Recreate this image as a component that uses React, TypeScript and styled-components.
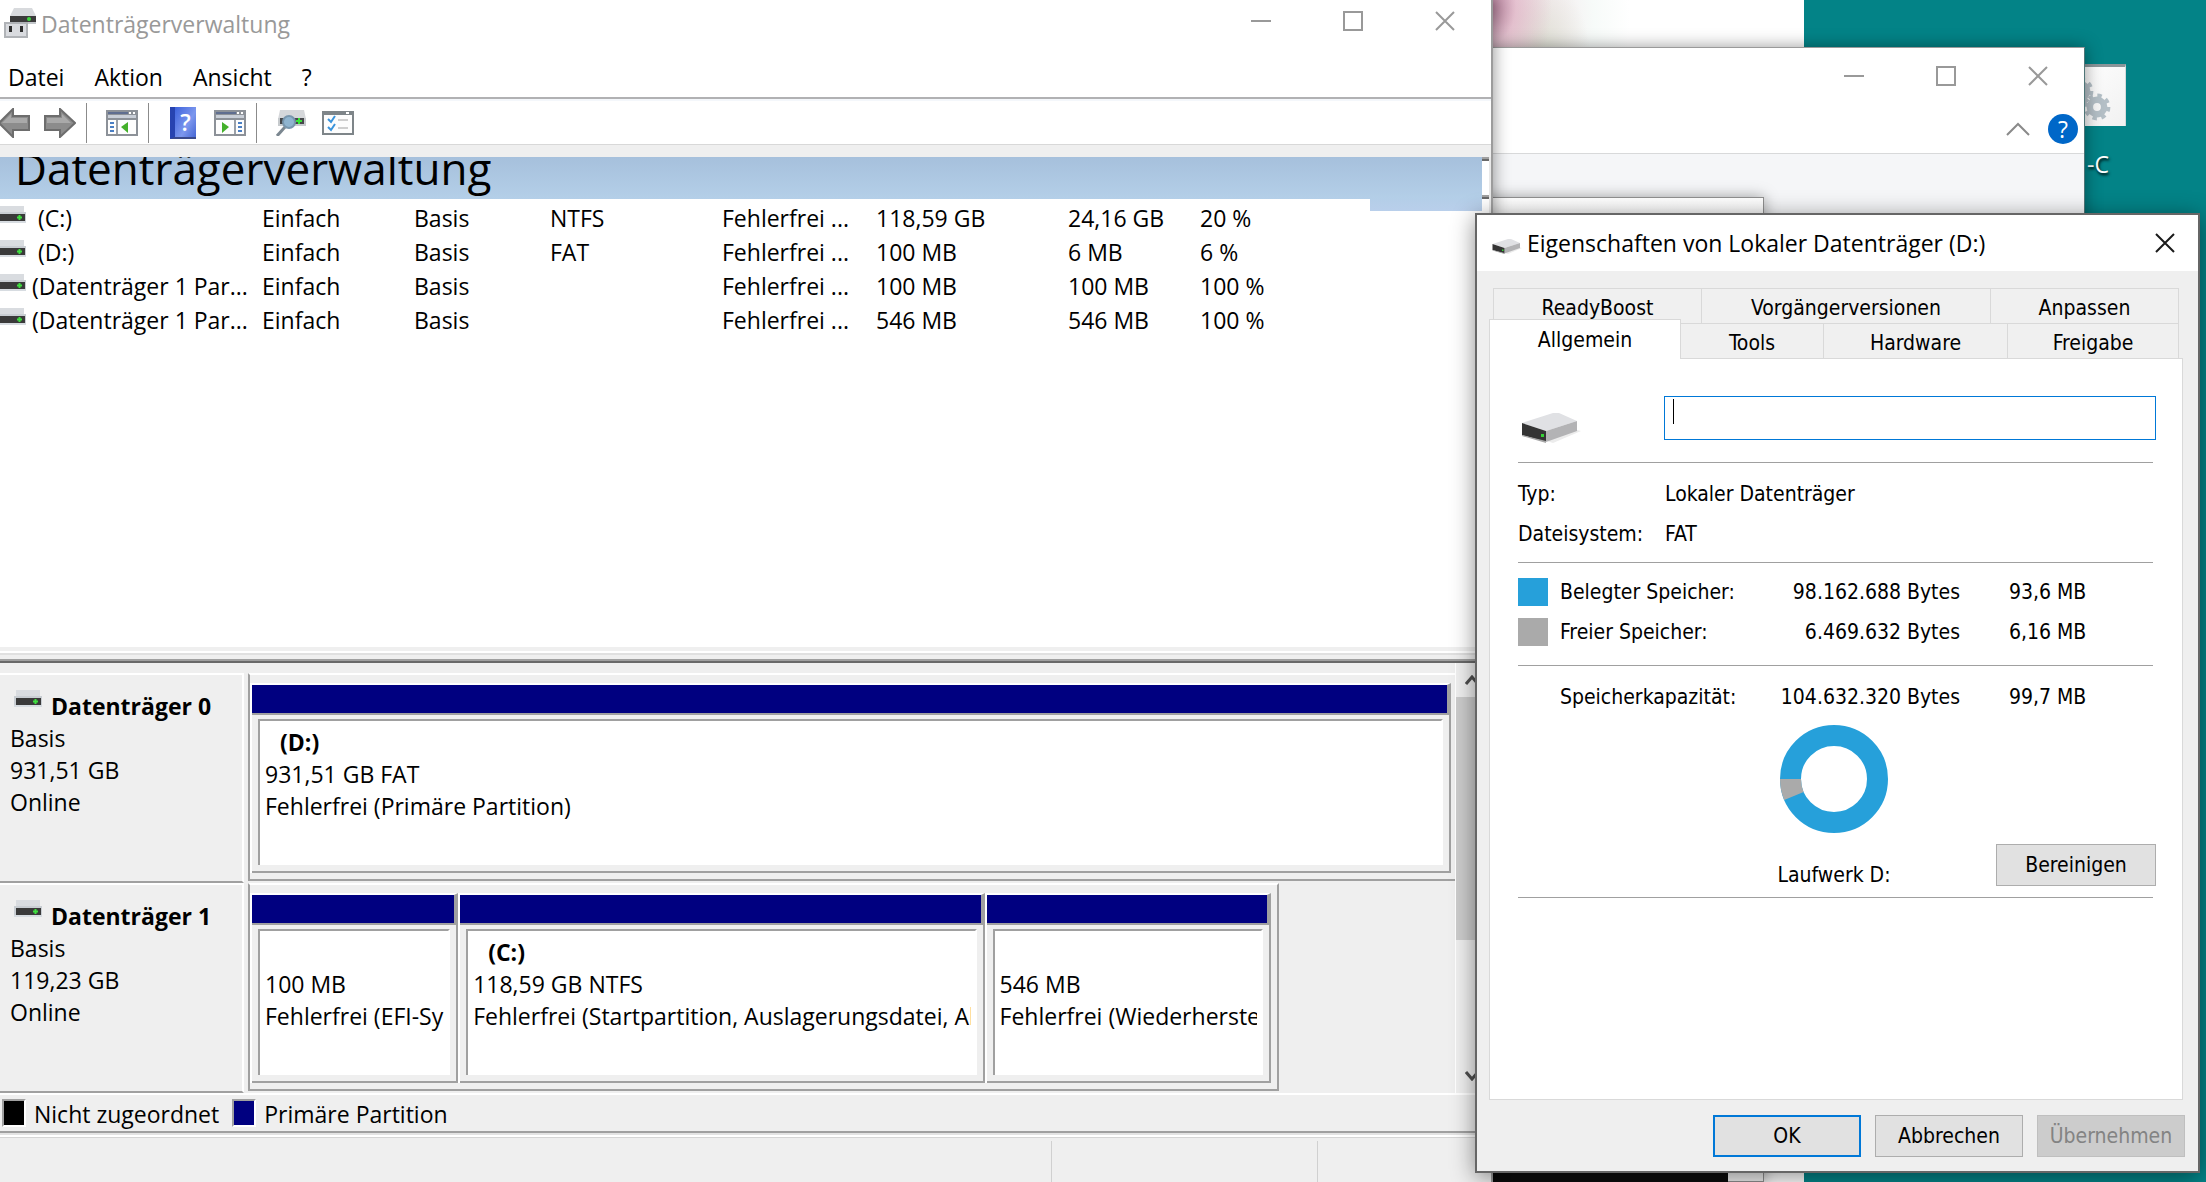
import React from "react";
import styled, { createGlobalStyle, css } from "styled-components";

const UI_FONT = `"Open Sans", "Noto Sans", sans-serif`;
const DIALOG_FONT = `"DejaVu Sans Condensed", "Open Sans", sans-serif`;

const GlobalStyle = createGlobalStyle`
  * { box-sizing: border-box; }
  body { margin: 0; background: #038387; color: #000; font-family: ${UI_FONT}; font-size: 23px; }
  button, input { font: inherit; color: inherit; }
  button { border: 0; padding: 0; background: none; }
  h1, h2, p, dl, dd, dt { margin: 0; font: inherit; }
  svg { display: block; flex: none; }
`;

const Desktop = styled.main`
  position: relative;
  height: 100vh;
  min-height: 1000px;
  overflow: hidden;
  background: #038387;
`;

/* ---------- shared window chrome ---------- */

const CaptionBar = styled.div`
  display: flex;
  margin-left: auto;
`;

const CaptionButton = styled.button<{ $dialog?: boolean }>`
  display: grid;
  place-items: center;
  width: ${(p) => (p.$dialog ? 66 : 92)}px;
  height: 56px;
  padding-bottom: ${(p) => (p.$dialog ? 0 : 14)}px;
  color: ${(p) => (p.$dialog ? "#1a1a1a" : "#999")};
`;

function MinimizeGlyph() {
  return (
    <svg width="20" height="20" viewBox="0 0 20 20" stroke="currentColor" strokeWidth="2">
      <path d="M0 10H20" />
    </svg>
  );
}

function MaximizeGlyph() {
  return (
    <svg width="20" height="20" viewBox="0 0 20 20" stroke="currentColor" strokeWidth="2" fill="none">
      <rect x="1" y="1" width="18" height="18" />
    </svg>
  );
}

function CloseGlyph() {
  return (
    <svg width="20" height="20" viewBox="0 0 20 20" stroke="currentColor" strokeWidth="2">
      <path d="M1 1L19 19M19 1L1 19" />
    </svg>
  );
}

function WindowControls() {
  return (
    <CaptionBar>
      <CaptionButton aria-label="Minimieren"><MinimizeGlyph /></CaptionButton>
      <CaptionButton aria-label="Maximieren"><MaximizeGlyph /></CaptionButton>
      <CaptionButton aria-label="Schließen"><CloseGlyph /></CaptionButton>
    </CaptionBar>
  );
}

/* ---------- background windows ---------- */

const PhotoWindow = styled.div`
  position: absolute;
  top: 0;
  bottom: 0;
  left: 1400px;
  right: 402px;
  background:
    radial-gradient(ellipse 60px 90px at 92px 6px, #b4809a 0%, rgba(222, 172, 194, 0.6) 40%, transparent 100%) no-repeat,
    radial-gradient(ellipse 50px 80px at 140px 56px, #dcdfd2 0%, transparent 100%) no-repeat,
    radial-gradient(ellipse 120px 140px at 110px 20px, #f2dce4 0%, #f7fbf9 70%, #fff 100%) no-repeat,
    #fff;
`;

const ShortcutIcon = styled.div`
  position: absolute;
  top: 64px;
  right: 80px;
  width: 60px;
  height: 62px;
  overflow: hidden;
  background: linear-gradient(135deg, #fff, #f1f1f1);
  border-top: 3px solid #8b9599;
  border-right: 1px solid #d5dadb;
`;

const ShortcutLabel = styled.span`
  position: absolute;
  top: 148px;
  right: 97px;
  line-height: 32px;
  color: #fff;
  text-shadow: 1px 2px 3px #000;
`;

const ExplorerWindow = styled.section`
  position: absolute;
  top: 47px;
  bottom: 100px;
  left: 1400px;
  right: 121px;
  background: #f5f6f8;
  border: 1px solid #9a9a9a;
  border-right-color: #4f7577;
  box-shadow: 0 0 16px rgba(0, 0, 0, 0.4);
`;

const ExplorerHead = styled.div`
  display: flex;
  flex-direction: column;
  height: 106px;
  padding-top: 7px;
  background: #fff;
  border-bottom: 1px solid #d8d9da;
`;

const RibbonTools = styled.div`
  display: flex;
  justify-content: flex-end;
  align-items: center;
  gap: 18px;
  padding: 3px 6px 0 0;
`;

const RibbonButton = styled.button`
  display: grid;
  place-items: center;
  height: 30px;
  color: #8a8a8a;
`;

const RoundHelp = styled.button`
  width: 30px;
  height: 30px;
  border-radius: 50%;
  background: #0067c8;
  color: #fff;
  font-size: 23px;
  line-height: 28px;
`;

const SmallWindow = styled.div`
  position: absolute;
  top: 197px;
  bottom: 0;
  left: 1400px;
  right: 442px;
  background: linear-gradient(#fff, #f6f6f6 20px, #efefef);
  border: 1px solid #8f8f8f;
  box-shadow: 0 0 14px rgba(0, 0, 0, 0.35);
`;

const ConsoleWindow = styled.div`
  position: absolute;
  bottom: 0;
  left: 1400px;
  right: 478px;
  height: 120px;
  background: #0c0c0c;
`;

function GearsDrawing() {
  const gear = (cx: number, cy: number, r: number) => (
    <g fill="none" stroke="#b4bfc6">
      <circle cx={cx} cy={cy} r={r * 0.55} strokeWidth={r * 0.5} />
      <circle cx={cx} cy={cy} r={r * 0.88} strokeWidth={r * 0.3} strokeDasharray={`${r * 0.34} ${r * 0.351}`} />
    </g>
  );
  return (
    <svg width="60" height="62" viewBox="0 0 60 62">
      {gear(14, 24, 13)}
      {gear(31, 40, 13)}
    </svg>
  );
}

function BackgroundWindows() {
  return (
    <>
      <PhotoWindow />
      <ShortcutIcon><GearsDrawing /></ShortcutIcon>
      <ShortcutLabel>-C</ShortcutLabel>
      <ExplorerWindow>
        <ExplorerHead>
          <WindowControls />
          <RibbonTools>
            <RibbonButton aria-label="Menüband minimieren">
              <svg width="24" height="14" viewBox="0 0 24 14" fill="none" stroke="currentColor" strokeWidth="2">
                <path d="M1 13L12 2L23 13" />
              </svg>
            </RibbonButton>
            <RoundHelp aria-label="Hilfe">?</RoundHelp>
          </RibbonTools>
        </ExplorerHead>
      </ExplorerWindow>
      <SmallWindow />
      <ConsoleWindow />
    </>
  );
}

/* ---------- disk management window ---------- */

const ManagerWindow = styled.section`
  position: absolute;
  inset: 0 713px 0 0;
  display: flex;
  flex-direction: column;
  background: #fff;
  border-right: 2px solid #9c9c9c;
  box-shadow: 0 0 16px rgba(0, 0, 0, 0.45);
`;

const ManagerTitle = styled.header`
  display: flex;
  align-items: flex-start;
  height: 56px;
  padding-left: 4px;
`;

const ManagerName = styled.h1`
  margin-left: 5px;
  line-height: 48px;
  color: #999;
`;

const TitleIcon = styled.span`
  padding-top: 7px;
`;

const MenuBar = styled.nav`
  display: flex;
  gap: 30px;
  height: 43px;
  padding-left: 8px;
  border-bottom: 2px solid #b1b1b3;
`;

const MenuItem = styled.button`
  line-height: 42px;
  height: 42px;
`;

const ToolBar = styled.div`
  display: flex;
  align-items: center;
  height: 46px;
  border-top: 2px solid #f4f7fb;
  border-bottom: 1px solid #d8d8d8;
`;

const ToolButton = styled.button<{ $before?: number }>`
  display: grid;
  place-items: center;
  margin-left: ${(p) => p.$before ?? 0}px;
`;

const ToolSeparator = styled.span`
  width: 1px;
  height: 40px;
  margin-left: 10px;
  background: #8b8b8b;
`;

const HelpBook = styled.span`
  display: block;
  width: 26px;
  height: 32px;
  border-left: 5px solid #2743b0;
  border-bottom: 2px solid #3a4a8c;
  background: linear-gradient(120deg, #3d62dc, #7c97ee 60%, #4566d4);
  color: #fff;
  font-size: 23px;
  font-weight: 600;
  line-height: 30px;
  text-align: center;
`;

const ManagerBody = styled.div`
  flex: 1;
  display: flex;
  flex-direction: column;
  min-height: 0;
  padding-top: 12px;
  background: #efefef;
`;

const UpperArea = styled.div`
  flex: 1;
  display: flex;
  min-height: 0;
  background: #fff;
`;

const ListPane = styled.div`
  position: relative;
  flex: 1;
  min-width: 0;
  overflow: hidden;
`;

const Banner = styled.div`
  display: flex;
  align-items: flex-end;
  height: 42px;
  padding-left: 15px;
  overflow: hidden;
  background: linear-gradient(#a6c0dc, #b4cfe8);
  font-size: 44px;
  line-height: 62px;
`;

const BannerTail = styled.div`
  position: absolute;
  top: 42px;
  right: 0;
  width: 112px;
  height: 12px;
  background: linear-gradient(#b4cee8, #b9cfeb);
`;

const EdgeRail = styled.div`
  display: flex;
  flex-direction: column;
  gap: 34px;
  width: 9px;
  border-right: 2px solid #e9e9e9;
`;

const EdgeMark = styled.span`
  height: 4px;
  border-top: 2px solid #a0a0a0;
  border-bottom: 2px solid #696969;
`;

const VolumeTable = styled.table`
  width: 100%;
  margin-top: 2px;
  border-collapse: collapse;
  table-layout: fixed;
`;

const VolumeCell = styled.td`
  height: 34px;
  padding: 0;
  line-height: 34px;
  white-space: pre;
  overflow: hidden;
`;

const VolumeName = styled.span`
  display: flex;
  gap: 6px;
  margin-left: -2px;
  align-items: flex-start;

  svg { margin-top: 5px; }
`;

const SplitBar = styled.div`
  height: 16px;
  background: linear-gradient(
    #efefef 4px, #fff 4px, #fff 6px, #e0e0e0 6px, #e0e0e0 8px,
    #efefef 8px, #efefef 12px, #a0a0a0 12px, #a0a0a0 14px, #696969 14px
  );
`;

const GraphArea = styled.div`
  display: flex;
  border-bottom: 2px solid #fff;
`;

const DiskList = styled.div`
  flex: 1;
  min-width: 0;
  padding-top: 10px;
`;

const DiskRow = styled.div`
  display: flex;
  align-items: flex-start;
  height: 210px;
`;

const DiskLabel = styled.div`
  width: 244px;
  height: 210px;
  padding: 15px 0 0 10px;
  border-top: 2px solid #fff;
  border-right: 2px solid #fff;
  border-bottom: 2px solid #a0a0a0;
  line-height: 32px;
`;

const DiskTitle = styled.p`
  display: flex;
  gap: 9px;
  padding-left: 4px;
  font-weight: 700;
`;

const DiskTrack = styled.div`
  flex: 1;
  height: 208px;
  min-width: 0;
  padding-left: 4px;
`;

const DiskStrip = styled.div<{ $share: number; $edge?: boolean }>`
  display: flex;
  width: ${(p) => p.$share}%;
  height: 208px;
  padding: 8px ${(p) => (p.$edge ? 6 : 4)}px 6px 0;
  border: 2px solid #a0a0a0;
  border-top-color: #fff;
  border-right: ${(p) => (p.$edge ? "2px solid #a0a0a0" : "0")};
`;

const PartitionBox = styled.div<{ $grow: number }>`
  display: flex;
  flex-direction: column;
  flex: ${(p) => p.$grow} 1 0;
  min-width: 0;
  border-left: 2px solid #fff;
`;

const PartitionBar = styled.div`
  height: 32px;
  background: #000080;
  border-top: 2px solid #fff;
  border-right: 4px solid #a0a0a0;
  border-bottom: 2px solid #a0a0a0;
`;

const PartitionFrame = styled.div`
  flex: 1;
  display: flex;
  padding: 4px 6px 6px;
  border-right: 2px solid #a0a0a0;
  border-bottom: 2px solid #a0a0a0;
`;

const PartitionInfo = styled.div`
  flex: 1;
  min-width: 0;
  padding: 5px 4px 0 5px;
  background: #fff;
  border-top: 2px solid #a0a0a0;
  border-left: 2px solid #a0a0a0;
  border-right: 2px solid #fff;
`;

const PartitionLine = styled.p<{ $bold?: boolean }>`
  height: 32px;
  line-height: 32px;
  white-space: nowrap;
  overflow: hidden;
  ${(p) => p.$bold && css`
    padding-left: 15px;
    font-weight: 700;
  `}
`;

const ScrollBar = styled.div`
  display: flex;
  flex-direction: column;
  width: 36px;
  padding-right: 4px;
  border-left: 1px solid #fff;
  background: #f0f0f0;
`;

const ScrollButton = styled.button`
  display: grid;
  place-items: center;
  height: 34px;
  color: #505050;
`;

const ScrollTrack = styled.div`
  flex: 1;
`;

const ScrollThumb = styled.div`
  height: 67%;
  background: #cdcdcd;
`;

const Legend = styled.div`
  display: flex;
  gap: 13px;
  height: 36px;
  padding: 4px 0 0 2px;
`;

const LegendItem = styled.span`
  display: flex;
  gap: 8px;
  line-height: 30px;
`;

const LegendSwatch = styled.i<{ $color: string }>`
  width: 24px;
  height: 28px;
  background: ${(p) => p.$color};
  border: 2px solid #fff;
  border-top-color: #a0a0a0;
  border-left-color: #a0a0a0;
`;

const StatusBar = styled.footer`
  display: flex;
  justify-content: flex-end;
  height: 51px;
  padding-top: 4px;
  border-top: 2px solid #a0a0a0;
  background: linear-gradient(#e3e3e3 2px, #fff 2px, #fff 4px, #d5d5d5 4px, #d5d5d5 5px, #efefef 5px);
`;

const StatusCell = styled.span<{ $width: number }>`
  width: ${(p) => p.$width}px;
  margin-top: 4px;
  border-left: 1px solid #d0d0d0;
`;

function DriveFrontIcon() {
  return (
    <svg width="28" height="17" viewBox="0 0 28 17">
      <path d="M2 0H26V6H28V17H0V6H2Z" fill="#c9ced3" />
      <path d="M2 0H26V6H2Z" fill="#d9dce0" />
      <rect x="2" y="8" width="25" height="7" fill="#3a3a3a" />
      <path d="M19 11.5H24M21.500 9V14" stroke="#3fe03f" strokeWidth="2" />
      <rect y="15" width="28" height="2" fill="#d7dce1" />
    </svg>
  );
}

function DrivePerspectiveIcon({ width, height }: { width: number; height: number }) {
  return (
    <svg width={width} height={height} viewBox="0 0 60 30" preserveAspectRatio="none">
      <path d="M26 28L56 17L60 18L32 30Z" fill="#ececec" />
      <path d="M1 10L32 0H38L56 8L25 18Z" fill="#e0e1e4" />
      <path d="M25 18L56 8V18L25 29Z" fill="#b3b3b5" />
      <path d="M1 10L25 18V29L1 22Z" fill="#343434" />
      <path d="M1 22L25 28V30L1 23Z" fill="#a6a6a6" />
      <rect x="20" y="21" width="3" height="3" fill="#34d234" />
    </svg>
  );
}

function ManagerIcon() {
  return (
    <svg width="32" height="31" viewBox="0 0 32 31">
      <path d="M10 1H28L32 9H6Z" fill="#d8dadd" />
      <rect x="6" y="9" width="26" height="7" fill="#3b3b3b" />
      <rect x="6" y="15" width="26" height="2" fill="#c4c8cc" />
      <circle cx="25" cy="12" r="2" fill="#3fd83f" />
      <path d="M0 15H24V31H0Z" fill="#b0b3b7" />
      <path d="M2 17H22V29H2Z" fill="#d9dbdf" />
      <path d="M5 19H8V25H5ZM16 19H19V25H16Z" fill="#2e2e2e" />
    </svg>
  );
}

function ArrowIcon({ forward }: { forward?: boolean }) {
  return (
    <svg width="32" height="30" viewBox="0 0 32 30">
      <path
        d={forward ? "M1 8H16V1L31 15L16 29V22H1Z" : "M29 8H13V1L-1 15L13 29V22H29Z"}
        fill="#8c8c8c"
        stroke="#6d6d6d"
        strokeWidth="2"
      />
      <path
        d={forward ? "M3 10H18V6L27 15H3Z" : "M27 10H11V6L2 15H27Z"}
        fill="#a9a9a9"
      />
    </svg>
  );
}

function PaneIcon({ side }: { side: "left" | "right" }) {
  const left = side === "left";
  return (
    <svg width="32" height="26" viewBox="0 0 32 26">
      <rect width="32" height="26" fill="#8c9198" />
      <rect x="2" y="2" width="20" height="2" fill="#5f6e90" />
      <path d="M23 2H25V4H23ZM27 2H29V4H27Z" fill="#fff" />
      <rect x="2" y="5" width="28" height="3" fill="#c9cfd8" />
      <rect x="2" y="10" width="28" height="14" fill="#fdfdfd" />
      <rect x={left ? 10 : 20} y="10" width="2" height="14" fill="#9aa0a8" />
      <path
        d={left ? "M4 12H8V14H4ZM4 16H8V18H4ZM4 20H8V22H4Z" : "M24 12H28V14H24ZM24 16H28V18H24ZM24 20H28V22H24Z"}
        fill="#4a7fc4"
      />
      <path d={left ? "M22 12V23L15 17Z" : "M8 12V23L15 17Z"} fill="#43b02a" />
    </svg>
  );
}

function RescanIcon() {
  return (
    <svg width="30" height="26" viewBox="0 0 30 26">
      <path d="M4 0H28L30 9H2Z" fill="#d5d7da" />
      <path d="M2 8H30V16H2Z" fill="#c6cacd" />
      <path d="M4 8H28V14H4Z" fill="#46484b" />
      <path d="M20 11H26M23 8V14" stroke="#37e437" strokeWidth="2" />
      <path d="M9 17L1 26" stroke="#7b8790" strokeWidth="3" />
      <circle cx="13" cy="12" r="6" fill="#8fb4cf" stroke="#7896ad" strokeWidth="2" />
    </svg>
  );
}

function ChecklistIcon() {
  return (
    <svg width="32" height="24" viewBox="0 0 32 24">
      <rect width="32" height="24" fill="#7e8589" />
      <path d="M24 1H27V3H24Z" fill="#fff" />
      <rect x="2" y="4" width="28" height="18" fill="#fdfdfd" />
      <path d="M6 8L9 11L13 5M6 16L9 19L13 13" fill="none" stroke="#3a94dc" strokeWidth="2" />
      <path d="M16 9H26M16 17H26" stroke="#cfcfcf" strokeWidth="2" />
    </svg>
  );
}

const volumes = [
  [" (C:)", "Einfach", "Basis", "NTFS", "Fehlerfrei ...", "118,59 GB", "24,16 GB", "20 %"],
  [" (D:)", "Einfach", "Basis", "FAT", "Fehlerfrei ...", "100 MB", "6 MB", "6 %"],
  ["(Datenträger 1 Par...", "Einfach", "Basis", "", "Fehlerfrei ...", "100 MB", "100 MB", "100 %"],
  ["(Datenträger 1 Par...", "Einfach", "Basis", "", "Fehlerfrei ...", "546 MB", "546 MB", "100 %"],
];

const columnWidths = [262, 152, 136, 172, 154, 192, 132];

const disks = [
  {
    name: "Datenträger 0",
    size: "931,51 GB",
    share: 100,
    partitions: [{ grow: 1, label: "(D:)", size: "931,51 GB FAT", state: "Fehlerfrei (Primäre Partition)" }],
  },
  {
    name: "Datenträger 1",
    size: "119,23 GB",
    share: 85.4,
    partitions: [
      { grow: 206, label: "", size: "100 MB", state: "Fehlerfrei (EFI-Sy" },
      { grow: 524, label: "(C:)", size: "118,59 GB NTFS", state: "Fehlerfrei (Startpartition, Auslagerungsdatei, Al" },
      { grow: 284, label: "", size: "546 MB", state: "Fehlerfrei (Wiederherste" },
    ],
  },
];

function DiskManager() {
  return (
    <ManagerWindow>
      <ManagerTitle>
        <TitleIcon><ManagerIcon /></TitleIcon>
        <ManagerName>Datenträgerverwaltung</ManagerName>
        <WindowControls />
      </ManagerTitle>
      <MenuBar>
        {["Datei", "Aktion", "Ansicht", "?"].map((item) => (
          <MenuItem key={item}>{item}</MenuItem>
        ))}
      </MenuBar>
      <ToolBar>
        <ToolButton aria-label="Zurück"><ArrowIcon /></ToolButton>
        <ToolButton $before={12} aria-label="Vorwärts"><ArrowIcon forward /></ToolButton>
        <ToolSeparator />
        <ToolButton $before={19} aria-label="Konsolenstruktur"><PaneIcon side="left" /></ToolButton>
        <ToolSeparator />
        <ToolButton $before={21} aria-label="Hilfe"><HelpBook>?</HelpBook></ToolButton>
        <ToolButton $before={18} aria-label="Aktionsbereich"><PaneIcon side="right" /></ToolButton>
        <ToolSeparator />
        <ToolButton $before={19} aria-label="Datenträger neu einlesen"><RescanIcon /></ToolButton>
        <ToolButton $before={16} aria-label="Einstellungen"><ChecklistIcon /></ToolButton>
      </ToolBar>
      <ManagerBody>
        <UpperArea>
          <ListPane>
            <Banner>Datenträgerverwaltung</Banner>
            <BannerTail />
            <VolumeTable>
              <colgroup>
                {columnWidths.map((width, i) => <col key={i} width={width} />)}
                <col />
              </colgroup>
              <tbody>
                {volumes.map((row, r) => (
                  <tr key={r}>
                    {row.map((value, c) => (
                      <VolumeCell key={c}>
                        {c === 0 ? <VolumeName><DriveFrontIcon /><span>{value}</span></VolumeName> : value}
                      </VolumeCell>
                    ))}
                  </tr>
                ))}
              </tbody>
            </VolumeTable>
          </ListPane>
          <EdgeRail><EdgeMark /><EdgeMark /></EdgeRail>
        </UpperArea>
        <SplitBar />
        <GraphArea>
          <DiskList>
            {disks.map((disk) => (
              <DiskRow key={disk.name}>
                <DiskLabel>
                  <DiskTitle><DriveFrontIcon />{disk.name}</DiskTitle>
                  <p>Basis</p>
                  <p>{disk.size}</p>
                  <p>Online</p>
                </DiskLabel>
                <DiskTrack>
                  <DiskStrip $share={disk.share} $edge={disk.share < 100}>
                    {disk.partitions.map((part) => (
                      <PartitionBox key={part.size} $grow={part.grow}>
                        <PartitionBar />
                        <PartitionFrame>
                          <PartitionInfo>
                            <PartitionLine $bold>{part.label}</PartitionLine>
                            <PartitionLine>{part.size}</PartitionLine>
                            <PartitionLine>{part.state}</PartitionLine>
                          </PartitionInfo>
                        </PartitionFrame>
                      </PartitionBox>
                    ))}
                  </DiskStrip>
                </DiskTrack>
              </DiskRow>
            ))}
          </DiskList>
          <ScrollBar>
            <ScrollButton aria-label="Nach oben">
              <svg width="14" height="10" viewBox="0 0 14 10" fill="none" stroke="currentColor" strokeWidth="3">
                <path d="M1 9L7 2L13 9" />
              </svg>
            </ScrollButton>
            <ScrollTrack><ScrollThumb /></ScrollTrack>
            <ScrollButton aria-label="Nach unten">
              <svg width="14" height="10" viewBox="0 0 14 10" fill="none" stroke="currentColor" strokeWidth="3">
                <path d="M1 1L7 8L13 1" />
              </svg>
            </ScrollButton>
          </ScrollBar>
        </GraphArea>
        <Legend>
          <LegendItem><LegendSwatch $color="#000" />Nicht zugeordnet</LegendItem>
          <LegendItem><LegendSwatch $color="#000080" />Primäre Partition</LegendItem>
        </Legend>
        <StatusBar>
          <StatusCell $width={266} />
          <StatusCell $width={174} />
        </StatusBar>
      </ManagerBody>
    </ManagerWindow>
  );
}

/* ---------- properties dialog ---------- */

const Dialog = styled.section`
  position: absolute;
  top: 213px;
  right: 6px;
  width: 725px;
  display: flex;
  flex-direction: column;
  background: #efefef;
  border: 2px solid #666;
  box-shadow: 0 4px 22px rgba(0, 0, 0, 0.45);
  font-family: ${DIALOG_FONT};
  font-size: 21px;
`;

const DialogTitle = styled.header`
  display: flex;
  align-items: center;
  height: 56px;
  padding-left: 15px;
  background: #fff;
  font-family: ${UI_FONT};
  font-size: 23px;

  svg { margin-top: 7px; }
  button svg { margin-top: 0; }
`;

const DialogName = styled.h2`
  margin-left: 5px;
`;

const DialogBody = styled.div`
  display: flex;
  flex-direction: column;
  padding: 17px 15px 14px 12px;
`;

const TabRow = styled.div`
  display: flex;
  margin: 0 4px;
`;

const Tab = styled.button<{ $width: number; $active?: boolean }>`
  flex: 1 1 ${(p) => p.$width}px;
  height: 35px;
  padding-top: 3px;
  border: 1px solid #d9d9d9;
  border-bottom: 0;
  background: #f0f0f0;

  & + & { border-left: 0; }

  ${(p) => p.$active && css`
    position: relative;
    height: 40px;
    margin: -4px 0 -1px -4px;
    padding: 0;
    background: #fff;
  `}
`;

const TabPage = styled.div`
  height: 742px;
  padding: 37px 26px 0 28px;
  background: #fff;
  border: 1px solid #d9d9d9;
`;

const NameRow = styled.div`
  display: flex;
  justify-content: space-between;
  height: 66px;
`;

const DriveSlot = styled.span`
  padding: 17px 0 0 3px;
`;

const NameInput = styled.input`
  width: 492px;
  height: 44px;
  padding: 0 8px;
  border: 1px solid #0078d7;
  border-radius: 0;
  outline: 0;
  background: linear-gradient(#000, #000) 8px 2px / 1px 25px no-repeat, #fff;
`;

const Section = styled.dl<{ $top: number; $bottom: number }>`
  margin-right: 3px;
  padding: ${(p) => p.$top}px 0 ${(p) => p.$bottom}px;
  border-top: 1px solid #a0a0a0;
`;

const InfoLine = styled.div`
  display: grid;
  grid-template-columns: 147px 1fr;
  line-height: 40px;
`;

const SpaceLine = styled.div`
  display: grid;
  grid-template-columns: 42px 200px 200px 1fr;
  align-items: center;
  line-height: 40px;
`;

const Swatch = styled.i<{ $color: string }>`
  width: 30px;
  height: 28px;
  background: ${(p) => p.$color};
`;

const Bytes = styled.dd`
  text-align: right;
`;

const Rounded = styled.dd`
  padding-left: 49px;
`;

const UsageRow = styled.div`
  display: grid;
  grid-template-columns: 260px 112px 1fr;
  align-items: end;
  padding: 8px 0 7px;
`;

const UsageChart = styled.figure`
  grid-column: 2;
  display: flex;
  flex-direction: column;
  align-items: center;
  gap: 27px;
  margin: 0;
  white-space: nowrap;
  line-height: 30px;
`;

const PushButton = styled.button<{ $width: number; $primary?: boolean }>`
  width: ${(p) => p.$width}px;
  height: 42px;
  background: #e1e1e1;
  border: ${(p) => (p.$primary ? "2px solid #0078d7" : "1px solid #adadad")};

  &:disabled {
    background: #cccccc;
    border-color: #bfbfbf;
    color: #838383;
  }
`;

const CleanupSlot = styled.div`
  display: flex;
  justify-content: flex-end;
  padding-bottom: 4px;
`;

const DialogButtons = styled.div`
  display: flex;
  justify-content: flex-end;
  gap: 20px;
  margin-top: 15px;
  margin-right: -2px;
  gap: 14px;
`;

function UsageDonut() {
  return (
    <svg width="108" height="108" viewBox="0 0 108 108" role="img" aria-label="Speicherbelegung">
      <circle cx="54" cy="54" r="43.5" fill="none" stroke="#26a0da" strokeWidth="21" />
      <path d="M0 54H21A33 33 0 0 0 23.6 66.9L4.2 75A54 54 0 0 1 0 54Z" fill="#aaaaaa" />
    </svg>
  );
}

function PropertiesDialog() {
  return (
    <Dialog role="dialog" aria-labelledby="dialog-name">
      <DialogTitle>
        <DrivePerspectiveIcon width={30} height={15} />
        <DialogName id="dialog-name">Eigenschaften von Lokaler Datenträger (D:)</DialogName>
        <CaptionBar>
          <CaptionButton $dialog aria-label="Schließen"><CloseGlyph /></CaptionButton>
        </CaptionBar>
      </DialogTitle>
      <DialogBody>
        <TabRow role="tablist">
          <Tab role="tab" $width={209}>ReadyBoost</Tab>
          <Tab role="tab" $width={289}>Vorgängerversionen</Tab>
          <Tab role="tab" $width={188}>Anpassen</Tab>
        </TabRow>
        <TabRow role="tablist">
          <Tab role="tab" $width={192} $active aria-selected>Allgemein</Tab>
          <Tab role="tab" $width={143}>Tools</Tab>
          <Tab role="tab" $width={184}>Hardware</Tab>
          <Tab role="tab" $width={171}>Freigabe</Tab>
        </TabRow>
        <TabPage role="tabpanel">
          <NameRow>
            <DriveSlot><DrivePerspectiveIcon width={60} height={30} /></DriveSlot>
            <NameInput type="text" aria-label="Name des Datenträgers" />
          </NameRow>
          <Section $top={11} $bottom={8}>
            <InfoLine><dt>Typ:</dt><dd>Lokaler Datenträger</dd></InfoLine>
            <InfoLine><dt>Dateisystem:</dt><dd>FAT</dd></InfoLine>
          </Section>
          <Section $top={9} $bottom={13}>
            <SpaceLine>
              <Swatch $color="#26a0da" />
              <dt>Belegter Speicher:</dt>
              <Bytes>98.162.688 Bytes</Bytes>
              <Rounded>93,6 MB</Rounded>
            </SpaceLine>
            <SpaceLine>
              <Swatch $color="#aaaaaa" />
              <dt>Freier Speicher:</dt>
              <Bytes>6.469.632 Bytes</Bytes>
              <Rounded>6,16 MB</Rounded>
            </SpaceLine>
          </Section>
          <Section $top={11} $bottom={0}>
            <SpaceLine>
              <span />
              <dt>Speicherkapazität:</dt>
              <Bytes>104.632.320 Bytes</Bytes>
              <Rounded>99,7 MB</Rounded>
            </SpaceLine>
          </Section>
          <UsageRow>
            <UsageChart>
              <UsageDonut />
              <figcaption>Laufwerk D:</figcaption>
            </UsageChart>
            <CleanupSlot><PushButton $width={160}>Bereinigen</PushButton></CleanupSlot>
          </UsageRow>
          <Section $top={0} $bottom={0} />
        </TabPage>
        <DialogButtons>
          <PushButton $width={148} $primary>OK</PushButton>
          <PushButton $width={148}>Abbrechen</PushButton>
          <PushButton $width={148} disabled>Übernehmen</PushButton>
        </DialogButtons>
      </DialogBody>
    </Dialog>
  );
}

export default function App() {
  return (
    <Desktop>
      <GlobalStyle />
      <BackgroundWindows />
      <DiskManager />
      <PropertiesDialog />
    </Desktop>
  );
}
